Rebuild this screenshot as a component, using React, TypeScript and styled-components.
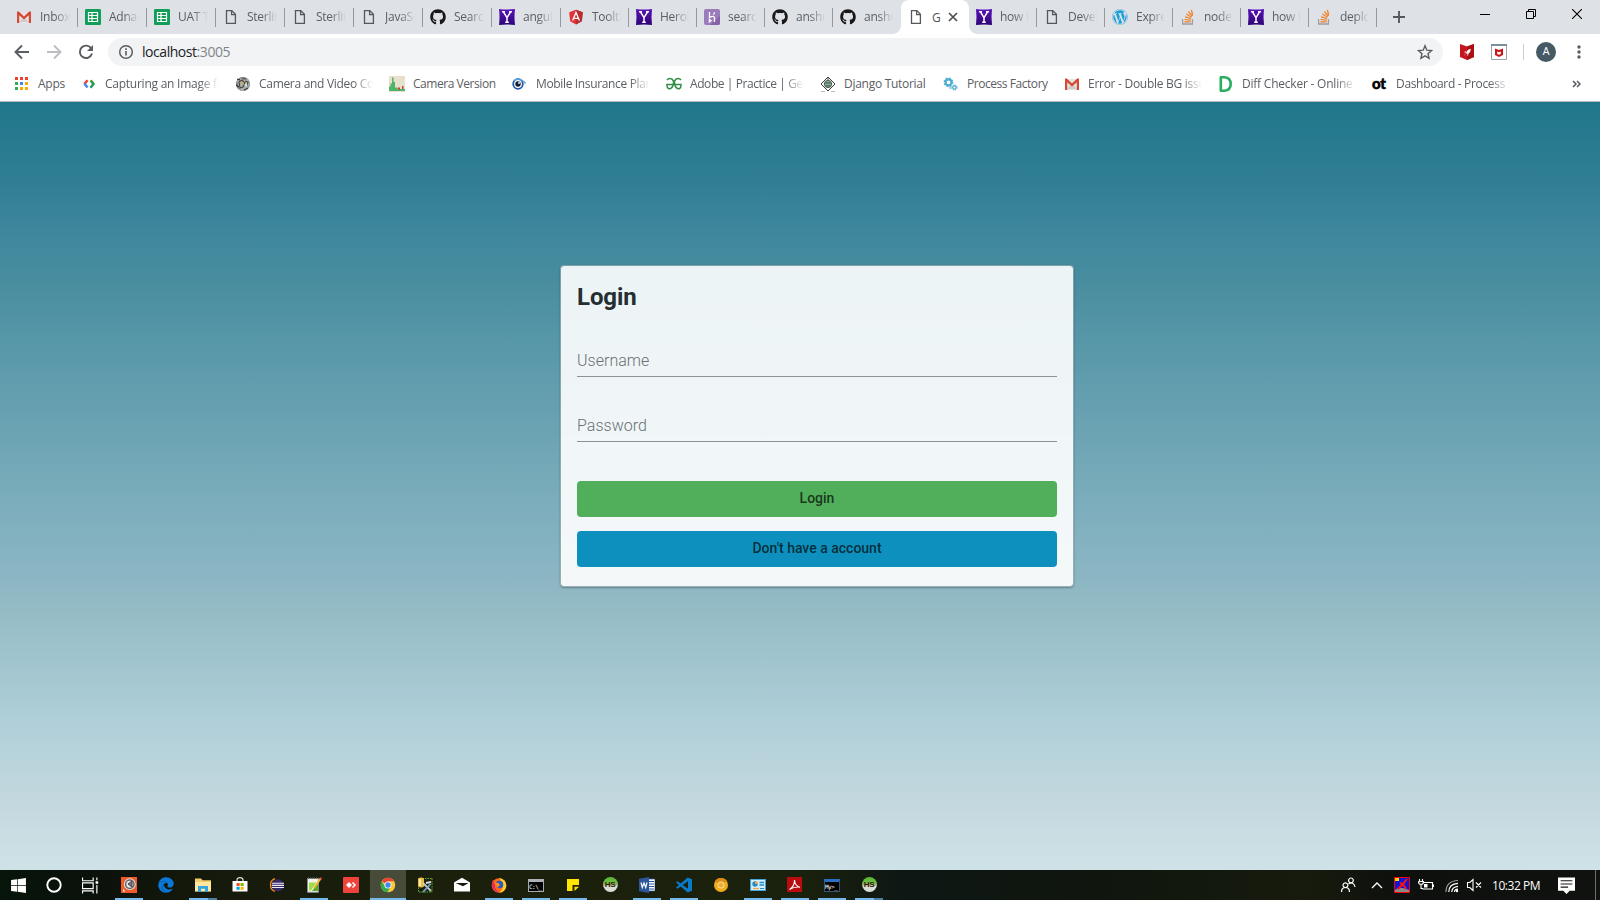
import React from 'react';
import styled, { createGlobalStyle } from 'styled-components';
import { FaGithub, FaWordpress, FaWindows, FaEdge } from 'react-icons/fa';

const GlobalStyle = createGlobalStyle`
  * { box-sizing: border-box; }
  body { margin: 0; overflow: hidden; }
  svg { flex: none; }
`;

const ui = '"Open Sans", "Noto Sans", sans-serif';

const Screen = styled.div`
  width: 1600px;
  height: 900px;
  display: flex;
  flex-direction: column;
  font-family: ${ui};
  background: #fff;
`;

/* ---------- tab strip ---------- */

const TabStrip = styled.header`
  flex: none;
  height: 34px;
  padding-left: 9px;
  display: flex;
  background: #dee1e6;
`;

const Tab = styled.div<{ $w: number; $active?: boolean; $line?: boolean }>`
  flex: none;
  position: relative;
  width: ${p => p.$w}px;
  height: 34px;
  padding: 0 8px 0 7px;
  display: flex;
  align-items: center;
  gap: 8px;
  background: ${p => (p.$active ? '#fff' : 'transparent')};
  border-radius: 8px 8px 0 0;

  &::after {
    content: '';
    display: ${p => (p.$line ? 'block' : 'none')};
    position: absolute;
    right: 0;
    top: 8px;
    width: 1px;
    height: 19px;
    background: #94979c;
  }
`;

const Foot = styled.i<{ $side: 'left' | 'right' }>`
  position: absolute;
  bottom: 0;
  ${p => p.$side}: -8px;
  width: 8px;
  height: 8px;
  background: radial-gradient(circle at ${p => p.$side} top, transparent 7.5px, #fff 8px);
`;

const TabTitle = styled.span`
  flex: 1;
  min-width: 0;
  height: 18px;
  line-height: 17px;
  overflow: hidden;
  white-space: nowrap;
  font-size: 12px;
  letter-spacing: -0.25px;
  color: #5b5e62;
  mask-image: linear-gradient(to right, #000 calc(100% - 15px), transparent);
`;

const ActiveTitle = styled.span`
  width: 8px;
  line-height: 17px;
  font-size: 12px;
  color: #505357;
`;

const NewTab = styled.div`
  display: flex;
  align-items: center;
  padding-left: 15px;
`;

const WindowControls = styled.div`
  margin-left: auto;
  display: flex;
  height: 28px;
  align-items: center;
`;

const WindowButton = styled.div`
  width: 46px;
  display: flex;
  justify-content: center;
`;

/* ---------- toolbar ---------- */

const Toolbar = styled.div`
  flex: none;
  height: 36px;
  display: flex;
  align-items: center;
  padding: 4px 11px 4px 14px;
`;

const NavButtons = styled.div`
  display: flex;
  gap: 16px;
  width: 94px;
`;

const Omnibox = styled.div`
  flex: none;
  width: 1335px;
  height: 28px;
  border-radius: 14px;
  background: #f1f3f4;
  display: flex;
  align-items: center;
  padding: 0 10px;
`;

const Address = styled.div`
  margin-left: 8px;
  flex: 1;
  font-size: 14px;
  line-height: 28px;
  letter-spacing: -0.45px;
  color: #202124;
  span { color: #80868b; }
`;

const Extensions = styled.div`
  flex: 1;
  display: flex;
  align-items: center;
  padding-left: 16px;
`;

const ExtIcon = styled.div`
  display: flex;
  margin-right: 16px;
`;

const ToolbarDivider = styled.div`
  width: 1px;
  height: 16px;
  background: #c9ccd1;
  margin-right: 12px;
`;

const Avatar = styled.div`
  width: 20px;
  height: 20px;
  border-radius: 50%;
  background: #455a64;
  color: #fff;
  font: 11px/20px Roboto, sans-serif;
  text-align: center;
`;

/* ---------- bookmarks ---------- */

const BookmarkBar = styled.nav`
  flex: none;
  height: 32px;
  border-bottom: 1px solid #b6b8ba;
  display: flex;
  align-items: center;
  gap: 16px;
  padding: 0 19px 3px 14px;
`;

const Bookmark = styled.div`
  flex: none;
  display: flex;
  align-items: center;
  gap: 8px;
`;

const BookmarkTitle = styled.span<{ $w: number; $sp?: number }>`
  width: ${p => p.$w}px;
  height: 18px;
  line-height: 17px;
  overflow: ${p => (p.$w === 114 ? 'hidden' : 'visible')};
  white-space: nowrap;
  font-size: 12px;
  letter-spacing: ${p => p.$sp ?? -0.25}px;
  color: #5b5e62;
  mask-image: ${p => (p.$w === 114 ? 'linear-gradient(to right, #000 calc(100% - 20px), transparent)' : 'none')};
`;

const More = styled.div`
  margin-left: auto;
  display: flex;
`;

/* ---------- page ---------- */

const Page = styled.main`
  flex: 1;
  display: flex;
  justify-content: center;
  align-items: flex-start;
  padding: 163px 0 0 34px;
  font-family: Roboto, sans-serif;
  background: linear-gradient(
    to bottom,
    #20768a 0%, #25798d 3%, #307e94 10%, #40889e 18%, #488d9f 23%, #5a99aa 33%,
    #78abba 50%, #8cb6c4 62%, #96bdc6 67%, #b0cfd9 81%, #c3d8de 91%, #cfe2e8 100%
  );
`;

const Card = styled.form`
  width: 514px;
  height: 322px;
  padding: 16px;
  border: 1px solid rgba(160, 170, 175, 0.65);
  border-radius: 4px;
  background: rgba(255, 255, 255, 0.9);
  background-clip: padding-box;
  box-shadow: 0 1px 2px rgba(0, 0, 0, 0.3);
  display: flex;
  flex-direction: column;
`;

const Heading = styled.h1`
  flex: none;
  margin: 0 0 34px;
  height: 30px;
  line-height: 30px;
  font-size: 24px;
  font-weight: 700;
  letter-spacing: -0.1px;
  color: #252e31;
`;

const Field = styled.label`
  flex: none;
  height: 31px;
  margin-bottom: 34px;
  border-bottom: 1px solid #8b9396;
  line-height: 29px;
  font-size: 16px;
  font-weight: 300;
  letter-spacing: 0.03px;
  color: #6a7073;
`;

const Button = styled.button<{ $bg: string }>`
  flex: none;
  height: 36px;
  margin: 5px 0 9px;
  padding: 0 0 2px;
  border: 0;
  border-radius: 4px;
  background: ${p => p.$bg};
  font: 500 14px Roboto, sans-serif;
  color: rgba(0, 0, 0, 0.7);
`;

/* ---------- taskbar ---------- */

const Taskbar = styled.footer`
  flex: none;
  height: 30px;
  display: flex;
  background: linear-gradient(to right, #07150a, #0a110b 90px, #15190c 200px, #1b200c 420px, #1a210c 800px, #0e1714 900px, #10160e 1100px, #171b0d 1310px, #0d100d 1400px, #10120f);
`;

const SystemCell = styled.div`
  width: 36px;
  display: flex;
  align-items: center;
  justify-content: center;
`;

const AppCells = styled.div`
  display: flex;
  gap: 1px;
  margin-left: 3px;
`;

const AppCell = styled.div<{ $state?: 'open' | 'multi' | 'active' }>`
  width: 36px;
  height: 30px;
  display: flex;
  flex-direction: column;
  align-items: center;
  justify-content: space-between;
  padding-top: 7px;
  background: ${p => (p.$state === 'active' ? '#474b39' : 'transparent')};

  &::after {
    content: '';
    height: 2px;
    width: ${p => (p.$state === 'active' ? 36 : 28)}px;
    background: ${p =>
      !p.$state ? 'transparent'
        : p.$state === 'multi' ? 'linear-gradient(to right, #76b9ed 19px, #4f7ea4 19px)'
        : '#76b9ed'};
  }
`;

const Tray = styled.div`
  margin-left: auto;
  display: flex;
  align-items: center;
  width: 261px;
`;

const TrayIcon = styled.div<{ $w: number }>`
  flex: none;
  width: ${p => p.$w}px;
  display: flex;
  justify-content: center;
`;

const Clock = styled.div`
  flex: none;
  width: 64px;
  padding-left: 2px;
  font-size: 12px;
  letter-spacing: -0.45px;
  color: #fff;
  white-space: nowrap;
`;

const PeekEdge = styled.div`
  width: 1px;
  height: 30px;
  margin-left: auto;
  margin-right: 4px;
  background: #6d6f6c;
`;

/* ---------- drawings ---------- */

const Svg = ({ s = 16, children }: { s?: number; children: React.ReactNode }) => (
  <svg width={s} height={s} viewBox="0 0 16 16" fill="none" display="block">{children}</svg>
);

const Gmail = () => (
  <Svg>
    <path d="M1 3h14v11H1z" fill="#e6e4e2" />
    <path d="M3 13l5-5 5 5z" fill="#cfccc9" />
    <path d="M1 14V2.6h1.8L8 7.5l5.2-4.9H15V14h-2.2V6.2L8 10.5 3.2 6.2V14z" fill="#d64937" />
  </Svg>
);
const Sheets = () => (
  <Svg>
    <rect width="16" height="16" rx="1.2" fill="#119e58" />
    <path d="M3.5 3.5h9v9h-9zM3.5 6.5h9M3.5 9.5h9M7 3.5v9" stroke="#fff" strokeWidth="1.2" />
  </Svg>
);
const Doc = () => (
  <Svg>
    <path d="M3.5 1.6h5.3l3.6 3.7v9.1H3.5zM8.6 1.8v3.8h3.6" stroke="#55585c" strokeWidth="1.3" />
  </Svg>
);
const Yahoo = () => (
  <Svg>
    <defs>
      <linearGradient id="yh" x1="0" y1="0" x2="0" y2="1">
        <stop stopColor="#5b14bb" /><stop offset="1" stopColor="#2d0375" />
      </linearGradient>
    </defs>
    <path d="M0 0q8 1 16 0q-1 8 0 16q-8-1-16 0q1-8 0-16z" fill="url(#yh)" />
    <path d="M3 2.7h3M10 2.7h3M4.4 2.8L8 8.6l3.6-5.8M8 8.2v5M6.2 13.3h3.6" stroke="#fff" strokeWidth="1.5" />
  </Svg>
);
const Angular = () => (
  <Svg>
    <path d="M8 .8l6.8 2.4-1 9L8 15.4 2.2 12.2l-1-9z" fill="#e23237" />
    <path d="M8 .8v14.6l5.8-3.2 1-9z" fill="#b52e31" />
    <path d="M4.6 11.4L8 3.4l3.4 8M5.8 9.3h4.4" stroke="#fff" strokeWidth="1.3" />
  </Svg>
);
const Heroku = () => (
  <Svg>
    <rect width="16" height="16" rx="2" fill="#9a7cbd" />
    <path d="M16 7v7a2 2 0 0 1-2 2H6z" fill="#8762ab" />
    <path d="M5.5 3v5.3q5-2 5 .6V13M10.4 3.2q0 1.4-1 2.4M5.4 10.4v2.6l1.6-1.3z" stroke="#fff" strokeWidth="1.3" />
  </Svg>
);
const Overflow = () => (
  <Svg>
    <path d="M2.6 10v5h9.8v-5" stroke="#9b9ea2" strokeWidth="1.3" />
    <path d="M4.4 12.8h6.2M4.5 10.5l6.2.7M5.1 7.8l5.9 1.7M6.4 5l5.2 3.2M8.4 2.5l3.9 4.7M11.4.8l1.3 5.6" stroke="#f08024" strokeWidth="1.25" />
  </Svg>
);
const Close = () => (
  <svg width="10" height="10" viewBox="0 0 10 10"><path d="M1 1l8 8M9 1L1 9" stroke="#4b4e52" strokeWidth="1.7" /></svg>
);
const AppsGrid = () => (
  <Svg>
    {['#ea4335', '#ea4335', '#ea4335', '#34a853', '#4285f4', '#f9ab00', '#34a853', '#f9ab00', '#f9ab00'].map((c, i) => (
      <rect key={i} x={1 + (i % 3) * 5} y={1 + Math.floor(i / 3) * 5} width="3" height="3" fill={c} />
    ))}
  </Svg>
);
const DevCode = () => (
  <Svg>
    <path d="M6.500 4.200L3.400 8" stroke="#ea4335" strokeWidth="2.5" />
    <path d="M3.400 7.6l3.100 4" stroke="#4285f4" strokeWidth="2.5" />
    <path d="M9.500 4.200L12.500 8" stroke="#fbbc05" strokeWidth="2.5" />
    <path d="M9.800 4.600L12.500 8l-3 3.700" stroke="#1d9d58" strokeWidth="2.4" />
  </Svg>
);
const Engraving = () => (
  <Svg>
    <circle cx="8" cy="8" r="7" fill="#6c6e6b" />
    <path d="M2 5l4-3 3 2 4-1 2 4-2 6-5 2-4-1z" fill="#a9b0b2" />
    <path d="M4 6l3-2 3 3-2 4-3 1zM10 5l3 1-1 4" stroke="#4b4335" strokeWidth="1.1" />
    <circle cx="7" cy="7" r="1.5" fill="#c3a66b" /><circle cx="11" cy="9" r="1.4" fill="#d9e2ea" />
    <path d="M2 3l3 1M1 9l3 2M9 14l4-2" stroke="#222" />
  </Svg>
);
const BarsIcon = () => (
  <Svg>
    <rect width="16" height="16" fill="#e9dfcd" />
    <path d="M0 13V10.500h1.500V7.500H3V1.500h1.500V6H6v5.500h2.500v1.500H16v2H0z" fill="#4fb36a" />
    <path d="M9 11.500h2v2H9zM13 10h1.500v3H13z" fill="#d83c2e" />
  </Svg>
);
const EyeIcon = () => (
  <Svg>
    <circle cx="6" cy="8" r="5.700" fill="#2456a8" />
    <path d="M2 4.500q5.500-4 11.500 3" stroke="#59a5e0" strokeWidth="1.5" />
    <circle cx="6" cy="8" r="3.900" fill="#fff" /><circle cx="6" cy="8" r="2.700" fill="#111c36" />
    <circle cx="7" cy="7" r=".9" fill="#fff" />
  </Svg>
);
const Geeks = () => (
  <Svg>
    <path d="M1 4q2-2.500 5-.8Q8.300 5 7.300 8q-.9 5-4.600 4.800Q.7 12 1 8.400h14q.300 3.600-1.700 4.400Q9.600 13 8.700 8 7.700 5 10 3.200q3-1.700 5 .8" stroke="#2f8d46" strokeWidth="1.500" />
  </Svg>
);
const Django = () => (
  <Svg>
    <path d="M8 1L15 8 8 15 1 8z" fill="#f4f6f4" stroke="#3c3c3c" strokeWidth="1" />
    <circle cx="8" cy="8" r="3.600" fill="#8fb29a" stroke="#3b4a40" strokeWidth=".9" />
    <path d="M5.500 7h5M6 9.500q2 1.400 4 0M8 1.500v2.500" stroke="#2f443a" strokeWidth=".9" />
    <path d="M1 15.500h4M11 15.500h4" stroke="#bbb" />
  </Svg>
);
const Gears = () => (
  <Svg>
    <circle cx="5.500" cy="6.300" r="3" stroke="#4daed0" strokeWidth="2.200" />
    <circle cx="5.500" cy="6.300" r="4.200" stroke="#4daed0" strokeWidth="1.500" strokeDasharray="1.700 1.600" />
    <circle cx="11.500" cy="11.500" r="1.700" stroke="#5cb4d3" strokeWidth="1.500" />
    <circle cx="11.500" cy="11.500" r="2.600" stroke="#5cb4d3" strokeDasharray="1.200 1.200" />
    <path d="M6 12h3" stroke="#8dcbe0" strokeWidth="1.500" />
  </Svg>
);
const DiffD = () => (
  <Svg>
    <path d="M2.800 1.300H6.500Q12.700 1.800 12.700 8t-6.200 6.700H2.800z" stroke="#27ae60" strokeWidth="2.600" strokeLinejoin="round" />
  </Svg>
);
const OtMark = styled.b`
  width: 16px;
  font: 900 15px/16px Lato, sans-serif;
  letter-spacing: -0.3px;
  -webkit-text-stroke: 0.5px #000;
  padding-bottom: 2px;
  color: #000;
`;
const BrandHS = styled.span`
  width: 15px;
  height: 15px;
  border-radius: 50%;
  background: linear-gradient(#5cb531 0, #6cc044 40%, #a9a46a 50%, #d9ddd8 62%);
  font: bold 8px/15px "Liberation Sans", sans-serif;
  letter-spacing: -0.3px;
  text-align: center;
  color: #2b1d05;
`;
const Terminal = styled.span<{ $blue?: boolean }>`
  width: 16px;
  height: 13px;
  margin-top: 2px;
  border: 1px solid ${p => (p.$blue ? '#31537c' : '#a5a9ae')};
  border-top: 3px solid ${p => (p.$blue ? '#2a6fc4' : '#aeb2b7')};
  background: #000;
  font: 6px/9px "DejaVu Sans Mono", monospace;
  letter-spacing: -0.5px;
  color: #fff;
`;

const tabs: [React.ReactNode, string][] = [
  [<Gmail />, 'Inbox'], [<Sheets />, 'Adnan'], [<Sheets />, 'UAT Te'], [<Doc />, 'Sterlite'], [<Doc />, 'Sterlite'],
  [<Doc />, 'JavaSc'], [<FaGithub size={16} color="#191717" />, 'Search'], [<Yahoo />, 'angula'], [<Angular />, 'Tooltip'],
  [<Yahoo />, 'Herok'], [<Heroku />, 'search'], [<FaGithub size={16} color="#191717" />, 'anshu'],
  [<FaGithub size={16} color="#191717" />, 'anshu'], [<Doc />, 'G'], [<Yahoo />, 'how to'], [<Doc />, 'Devel'],
  [<FaWordpress size={16} color="#1a9fd9" />, 'Expre'], [<Overflow />, 'node'], [<Yahoo />, 'how to'], [<Overflow />, 'deplo'],
];
const ACTIVE = 13;

const bookmarks: [React.ReactNode, string, number, number?][] = [
  [<AppsGrid />, 'Apps', 27],
  [<DevCode />, 'Capturing an Image fr', 114],
  [<Engraving />, 'Camera and Video Con', 114, -0.3],
  [<BarsIcon />, 'Camera Version', 83, -0.45],
  [<EyeIcon />, 'Mobile Insurance Plan', 114, -0.35],
  [<Geeks />, 'Adobe | Practice | Geek', 114, -0.42],
  [<Django />, 'Django Tutorial', 83, -0.28],
  [<Gears />, 'Process Factory', 81, -0.45],
  [<Gmail />, 'Error - Double BG issu', 114, -0.28],
  [<DiffD />, 'Diff Checker - Online', 114, -0.22],
  [<OtMark>ot</OtMark>, 'Dashboard - Process S', 114, -0.33],
];

const chrome = (
  <Svg>
    <circle cx="8" cy="8" r="7.300" fill="#fcc934" />
    <path d="M8 8L1.700 4.300A7.300 7.300 0 0 1 14.300 4.300H8z" fill="#ea4335" />
    <path d="M1.700 4.300A7.300 7.300 0 0 0 7.500 15.300L10.600 9.500 8 8 5 9.500z" fill="#34a853" />
    <circle cx="8" cy="8" r="3.500" fill="#fff" /><circle cx="8" cy="8" r="2.700" fill="#4285f4" />
  </Svg>
);

const apps: [React.ReactNode, ('open' | 'multi' | 'active')?][] = [
  [<Svg><rect width="16" height="16" fill="#f05a28" /><circle cx="8.800" cy="7.200" r="5.900" fill="#e5e5e5" /><circle cx="8.800" cy="7.200" r="4.200" stroke="#666" strokeWidth="1.500" /><path d="M7 7l4-3v6z" fill="#777" stroke="#444" /><path d="M2 14.500v-2.500l2.500 2.500z" fill="#fff" /></Svg>, 'open'],
  [<FaEdge size={16} color="#0b78d7" />],
  [<Svg><path d="M0 1.500h6l1.500 1.700H16v11H0z" fill="#f3cd6a" /><path d="M0 5h16v9.500H0z" fill="#ffe9a2" /><path d="M3 9h10v6h-3v-3.200H6V15H3z" fill="#32a6e0" /></Svg>, 'multi'],
  [<Svg><path d="M5 5V3q0-2.300 3-2.300T11 3v2" stroke="#ddd" strokeWidth="1.200" /><path d="M.5 4h15v10.500H.5z" fill="#fff" /><path d="M4.500 6H7.700v3H4.500z" fill="#f25022" /><path d="M8.500 6h3.200v3H8.500z" fill="#7fba00" /><path d="M4.500 9.800h3.200v3H4.500z" fill="#00a4ef" /><path d="M8.500 9.800h3.200v3H8.500z" fill="#ffb900" /></Svg>],
  [<Svg><path d="M6 1.800Q1.500 3 1.500 8T6 14.300" stroke="#e8871e" strokeWidth="1.400" /><circle cx="8.800" cy="8.300" r="6" fill="#352b68" /><path d="M3 6.300h12M2.800 8.400h12.200M3 10.500h12" stroke="#eeeaf5" strokeWidth="1.100" /></Svg>],
  [<Svg><path d="M1.500 1.500h11v13.800h-11z" fill="#f2f2ee" stroke="#888" /><path d="M2 1h10" stroke="#555" strokeWidth="1.500" strokeDasharray="1 1" /><path d="M3 5.500h7l-5 8H3z" fill="#9ddc45" /><path d="M6 14l6-8v8z" fill="#54ac25" /><path d="M14.500 1.500L8 11" stroke="#eeb738" strokeWidth="2.200" /><path d="M15.300.7l-1 1.500" stroke="#d73a2e" strokeWidth="2.400" /></Svg>, 'open'],
  [<Svg><rect width="16" height="16" rx="1" fill="#ef443b" /><path d="M6 5L9 8l-3 3-3-3z" fill="#fff" /><path d="M9.500 5.500l2.500 2.500-2.500 2.500" stroke="#fff" strokeWidth="1.500" /></Svg>],
  [chrome, 'active'],
  [<Svg><path d="M5.500 1.500H15M15 1.500V15H1.500V10" stroke="#58b52b" strokeDasharray="1.500 1" /><path d="M1 1.500q3-2 6 0v8q-3 2-6 0z" fill="#e8bd45" /><path d="M2 2h2v7H2z" fill="#f9e7a2" /><path d="M6 6l8 8" stroke="#c8cdd2" strokeWidth="1.800" /><path d="M13.500 7L6 15" stroke="#79a3ce" strokeWidth="1.800" /><path d="M9 6l5-1" stroke="#ddd" strokeWidth="2" /></Svg>],
  [<Svg><path d="M0 5.500L8 .8l8 4.700v9H0z" fill="#fff" /><path d="M1.500 6h13L9 9.300z" fill="#15190c" /></Svg>],
  [<Svg><circle cx="8" cy="8.500" r="7.300" fill="#ff6a1a" /><path d="M8 1Q15.500 2 15.300 9.500 14 15.500 8 15.800 13 12 11.500 6z" fill="#ffcb2d" /><path d="M1.500 3Q0 9 3 13q3 3 6 2.500Q3 13 4 8z" fill="#e8255e" /><circle cx="8.500" cy="7.500" r="3.800" fill="#285bbd" /><path d="M4 6q4-1 5 2-2 1-2 3-3-2-3-5z" fill="#ff8e1f" /></Svg>, 'open'],
  [<Terminal>C:\_</Terminal>, 'open'],
  [<Svg><path d="M2 2h12v6.500L8.500 14H2z" fill="#ffe500" /><path d="M7.500 8H14v1l-4.500 5h-2z" fill="#25240b" /><path d="M9.500 9.800H14L9.500 14z" fill="#ffe500" /></Svg>, 'open'],
  [<BrandHS>HS</BrandHS>],
  [<Svg><path d="M8 2h8v12H8z" fill="#fff" stroke="#2b579a" strokeWidth=".7" /><path d="M10 4.500h5M10 7h5M10 9.500h5M10 12h5" stroke="#2b579a" /><path d="M0 1.800L10 0v16L0 14.200z" fill="#2b579a" /><path d="M2 5.500l1.300 5L5 6l1.700 4.500L8 5.500" stroke="#fff" strokeWidth="1.200" /></Svg>, 'open'],
  [<Svg><path d="M11.700.5L16 2.300v11.400l-4.300 1.800L0 5.500l1.500-1.300L12 11.700V4.300L1.500 11.800 0 10.500z" fill="#0a7bc8" /></Svg>, 'open'],
  [<Svg><circle cx="8" cy="8" r="7" fill="#f1ad18" /><path d="M8 8L2 4.300A7 7 0 0 1 14 4.300z" fill="#dc8d12" /><circle cx="8" cy="8" r="3.500" fill="#fbe1a0" /><circle cx="8" cy="8" r="2.600" fill="#efad32" /></Svg>],
  [<Svg><path d="M.5 2.500h15v11H.5z" fill="#d6effb" stroke="#46a3dc" strokeWidth="1.200" /><circle cx="5" cy="7" r="2.700" fill="#2289c9" /><path d="M5 7V4.300A2.700 2.700 0 0 1 7.700 7z" fill="#f2a33a" /><path d="M9.500 5.500h4.500M9.500 8h4.500" stroke="#2289c9" strokeWidth="1.500" /><path d="M3 11.500h6" stroke="#f2a33a" strokeWidth="1.200" /><path d="M10 11.500h4" stroke="#2289c9" /></Svg>, 'open'],
  [<Svg><rect width="15" height="15" fill="#b90c0f" /><path d="M2.500 12.500q5-3 5-9.500.5 6 5.500 7.300-5-1-10.500 2.200z" stroke="#fff" strokeWidth="1.100" /></Svg>, 'open'],
  [<Terminal $blue>My&gt;_</Terminal>, 'open'],
  [<BrandHS>HS</BrandHS>, 'multi'],
];

export default function App() {
  return (
    <Screen>
      <GlobalStyle />
      <TabStrip>
        {tabs.map(([icon, title], i) => (
          <Tab key={i} $w={i < 8 ? 69 : 68} $active={i === ACTIVE} $line={i !== ACTIVE && i !== ACTIVE - 1}>
            {icon}
            {i === ACTIVE ? (
              <>
                <ActiveTitle>{title}</ActiveTitle>
                <Close />
                <Foot $side="left" />
                <Foot $side="right" />
              </>
            ) : (
              <TabTitle>{title}</TabTitle>
            )}
          </Tab>
        ))}
        <NewTab>
          <svg width="14" height="14" viewBox="0 0 14 14"><path d="M7 1v12M1 7h12" stroke="#55585c" strokeWidth="1.900" /></svg>
        </NewTab>
        <WindowControls>
          <WindowButton><svg width="10" height="10"><path d="M0 5.500h10" stroke="#000" /></svg></WindowButton>
          <WindowButton><svg width="10" height="10" fill="none"><path d="M.5 2.500h7v7h-7zM2.500 2.500v-2h7v7h-2" stroke="#000" /></svg></WindowButton>
          <WindowButton><svg width="10" height="10"><path d="M0 0l10 10M10 0L0 10" stroke="#000" strokeWidth="1.100" /></svg></WindowButton>
        </WindowControls>
      </TabStrip>

      <Toolbar>
        <NavButtons>
          <Svg><path d="M15 8H2M8 1.500L1.500 8 8 14.500" stroke="#5a5d61" strokeWidth="1.900" /></Svg>
          <Svg><path d="M1 8h13M8 1.500L14.500 8 8 14.500" stroke="#bcbec1" strokeWidth="1.900" /></Svg>
          <Svg><path d="M13.300 4.500A6.200 6.200 0 1 0 14 9.500" stroke="#5a5d61" strokeWidth="1.900" /><path d="M15 1v6H9z" fill="#5a5d61" /></Svg>
        </NavButtons>
        <Omnibox>
          <Svg><circle cx="8" cy="8" r="6.300" stroke="#5a5d61" strokeWidth="1.500" /><path d="M8 7v4.500M8 4.300v1.600" stroke="#5a5d61" strokeWidth="1.600" /></Svg>
          <Address>localhost<span>:3005</span></Address>
          <Svg><path d="M8 1.800l1.800 4.400 4.800.4-3.600 3.100 1.100 4.700L8 11.900l-4.100 2.500L5 9.700 1.400 6.600l4.800-.4z" stroke="#5a5d61" strokeWidth="1.400" /></Svg>
        </Omnibox>
        <Extensions>
          <ExtIcon>
            <Svg><path d="M1 0l7 2.500L15 0v13l-7 3-7-3z" fill="#c4161c" /><path d="M8 2.500L15 0v13l-7 3z" fill="#a90f15" /><path d="M11.500 5q-3.200.5-4.300 4l1 1q3.400-1 3.300-5zM7 7.200l-1.500 1 1 .5M9.300 9.700l-.5 1.800-.5-.8M5.300 11.500l1.300-1.300" fill="#fff" stroke="#fff" strokeWidth=".4" /></Svg>
          </ExtIcon>
          <ExtIcon>
            <Svg><path d="M.5.5h15v15H.5z" fill="#fff" stroke="#9aa3a9" /><path d="M0 0h16v2H0z" fill="#78909c" /><path d="M4 4.500l4 1.500 4-1.500V11l-4 2-4-2z" fill="#c4161c" /><path d="M6.200 7.500L8 8.300l1.800-.8V10l-1.800.8L6.200 10z" fill="#fff" /></Svg>
          </ExtIcon>
          <ToolbarDivider />
          <Avatar>A</Avatar>
        </Extensions>
        <svg width="20" height="16"><g fill="#5a5d61"><circle cx="10" cy="3" r="1.700" /><circle cx="10" cy="8" r="1.700" /><circle cx="10" cy="13" r="1.700" /></g></svg>
      </Toolbar>

      <BookmarkBar>
        {bookmarks.map(([icon, title, w, sp]) => (
          <Bookmark key={title}>{icon}<BookmarkTitle $w={w} $sp={sp}>{title}</BookmarkTitle></Bookmark>
        ))}
        <More><svg width="9" height="8" fill="none"><path d="M1 1l3 3-3 3M5 1l3 3-3 3" stroke="#55585c" strokeWidth="1.500" /></svg></More>
      </BookmarkBar>

      <Page>
        <Card>
          <Heading>Login</Heading>
          <Field>Username</Field>
          <Field>Password</Field>
          <Button type="button" $bg="#51ae5b">Login</Button>
          <Button type="button" $bg="#0d90bd">Don't have a account</Button>
        </Card>
      </Page>

      <Taskbar>
        <SystemCell><FaWindows size={17} color="#fff" /></SystemCell>
        <SystemCell><Svg><circle cx="8" cy="8" r="6.700" stroke="#fff" strokeWidth="1.900" /></Svg></SystemCell>
        <SystemCell><Svg s={17}><path d="M.5.5v3h10v-3M.5 5.500h10v5.500H.5zM.5 15.500v-2.500h10v2.500M14 .5v2.500M14 7.500v8" stroke="#fff" strokeWidth="1.100" /><path d="M12.800 4h2.400v2.400h-2.400z" fill="#fff" /></Svg></SystemCell>
        <AppCells>
          {apps.map(([icon, state], i) => <AppCell key={i} $state={state}>{icon}</AppCell>)}
        </AppCells>
        <Tray>
          <TrayIcon $w={17}><Svg><path d="M11 1a2.400 2.400 0 1 1-.1 0zM5.500 5.800a2.400 2.400 0 1 1-.1 0z" stroke="#fff" strokeWidth="1.200" /><path d="M1.500 15q0-4.500 4-4.500t4 4.500M8.500 7q2-1.500 4-.8t2.500 3.800" stroke="#fff" strokeWidth="1.200" /></Svg></TrayIcon>
          <TrayIcon $w={42}><svg width="12" height="8" fill="none"><path d="M1 7l5-5 5 5" stroke="#fff" strokeWidth="1.300" /></svg></TrayIcon>
          <TrayIcon $w={7}><Svg><path d="M.5.500h15v15H.5z" fill="#0d16d8" stroke="#f00" /><path d="M1 1h4v3H1z" fill="#fd0" /><path d="M1 13l3-2h5l6 2v2H1z" fill="#8a8a8a" /><path d="M13 2L9 7l-5 5M6 6l3 1 3 5" stroke="#f11" strokeWidth="2" /></Svg></TrayIcon>
          <TrayIcon $w={41}><Svg><path d="M5.500 5.500h9v6.500H4.500M15.500 7.500v2.500" stroke="#fff" strokeWidth="1.100" /><path d="M6 7h3.500v3.500H6z" fill="#fff" /><path d="M1.500 2v2M4.500 2v2M.5 4.500h5q0 3-2.500 3T.5 4.500M3 7.500v4h2" stroke="#fff" strokeWidth="1.100" /></Svg></TrayIcon>
          <TrayIcon $w={11}><Svg><path d="M2 15Q2 4 14 3.500" stroke="#9a9c99" strokeWidth="1.200" /><path d="M4.800 15q0-8 9.200-8.600M7.800 15q0-5 6.200-5.600M10.500 15q0-2.500 3.500-2.800" stroke="#fff" strokeWidth="1.200" /><circle cx="13" cy="14" r="1.200" fill="#fff" /></Svg></TrayIcon>
          <TrayIcon $w={33}><Svg><path d="M1.500 5.500h2.300L7 2.500v11l-3.200-3H1.500zM10 5.500l5 5M15 5.500l-5 5" stroke="#fff" strokeWidth="1.100" /></Svg></TrayIcon>
          <Clock>10:32 PM</Clock>
          <TrayIcon $w={24}><Svg s={17}><path d="M0 .5h16v12.500h-5L8 16l-3-3H0z" fill="#fff" /><path d="M2.500 3.500h11M2.500 6.500h11M2.500 9.500h7" stroke="#151714" /></Svg></TrayIcon>
          <PeekEdge />
        </Tray>
      </Taskbar>
    </Screen>
  );
}
